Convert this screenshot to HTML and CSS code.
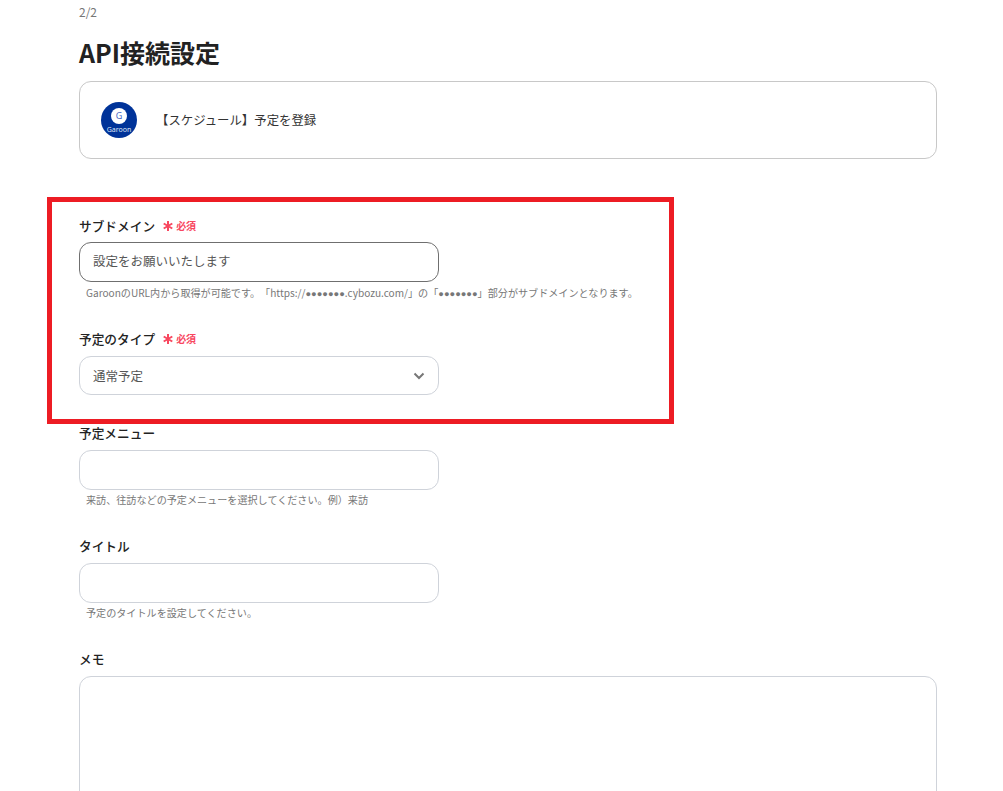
FILE: index.html
```html
<!DOCTYPE html>
<html lang="ja">
<head>
<meta charset="utf-8">
<title>API接続設定</title>
<link rel="stylesheet" href="styles.css">
</head>
<body>
<main class="page">
  <div class="step">2/2</div>
  <h1 class="title">API接続設定</h1>
  <section class="action-card">
    <svg class="logo" viewBox="0 0 36 36" aria-hidden="true">
      <circle cx="18" cy="18" r="18" fill="#003399"/>
      <circle cx="18" cy="14" r="8" fill="#fff"/>
      <text x="18" y="17.3" class="logo-g">G</text>
      <text x="18" y="29.5" class="logo-name">Garoon</text>
    </svg>
    <span class="action-text">【スケジュール】予定を登録</span>
  </section>
  <form class="form">
    <div class="field field-first">
      <div class="label"><span>サブドメイン</span><span class="req"><svg class="star" viewBox="0 0 12 12" aria-hidden="true"><path d="M6 1v10M1.7 3.5l8.6 5M10.3 3.5l-8.6 5"/></svg>必須</span></div>
      <div class="input input-filled"><span class="filled-text">設定をお願いいたします</span></div>
      <p class="hint">GaroonのURL内から取得が可能です。「https://<span class="dots">●●●●●●●</span>.cybozu.com/」の「<span class="dots">●●●●●●●</span>」部分がサブドメインとなります。</p>
    </div>
    <div class="field field-select">
      <div class="label"><span>予定のタイプ</span><span class="req"><svg class="star" viewBox="0 0 12 12" aria-hidden="true"><path d="M6 1v10M1.7 3.5l8.6 5M10.3 3.5l-8.6 5"/></svg>必須</span></div>
      <div class="input select"><span>通常予定</span>
        <svg class="chevron" viewBox="0 0 12 8" aria-hidden="true"><path d="M1.5 1.5 6 6l4.5-4.5"/></svg>
      </div>
    </div>
    <div class="field field-menu">
      <div class="label"><span>予定メニュー</span></div>
      <div class="input input-lower"></div>
      <p class="hint hint-lower">来訪、往訪などの予定メニューを選択してください。例）来訪</p>
    </div>
    <div class="field field-title">
      <div class="label"><span>タイトル</span></div>
      <div class="input input-lower"></div>
      <p class="hint hint-lower">予定のタイトルを設定してください。</p>
    </div>
    <div class="field field-memo">
      <div class="label"><span>メモ</span></div>
      <div class="textarea"></div>
    </div>
  </form>
  <div class="highlight"></div>
</main>
</body>
</html>
```

FILE: styles.css
```css
* { box-sizing: border-box; }
html, body { margin: 0; height: 791px; overflow: hidden; background: #fff; }
body { font-family: "Noto Sans CJK JP", "Noto Sans", sans-serif; color: #222; }
.page { position: relative; width: 1003px; height: 791px; padding: 0 66px 0 79px; overflow: hidden; }
.step { height: 25px; padding-top: 3px; font-size: 12px; line-height: 18px; color: #777; }
.title { margin: 0; height: 56px; font-size: 25px; line-height: 54px; font-weight: 700; color: #222; }
.action-card { display: flex; align-items: center; height: 78px; padding-left: 21px; border: 1px solid #c8c8c8; border-radius: 12px; }
.logo { width: 36px; height: 36px; flex: none; }
.logo-g { font-family: "Open Sans", sans-serif; font-size: 9px; fill: #3b5cc0; text-anchor: middle; }
.logo-name { font-family: "Noto Sans", sans-serif; font-size: 7px; fill: #dfe6f7; text-anchor: middle; }
.action-text { margin-left: 19px; font-size: 12.4px; line-height: 18px; color: #333; }
.form { display: flex; flex-direction: column; }
.label { display: flex; align-items: center; height: 20px; font-size: 12.7px; font-weight: 500; line-height: 20px; color: #222; }
.req { display: flex; align-items: center; margin-left: 7px; font-size: 10px; font-weight: 700; color: #f8475f; }
.star { width: 12px; height: 12px; margin-right: 2px; fill: none; stroke: #f8475f; stroke-width: 2; }
.input { display: flex; align-items: center; width: 360px; height: 40px; margin-top: 6px; padding: 0 13px; border: 1px solid #cfd3da; border-radius: 12px; font-size: 12.5px; color: #555; }
.input-filled { border-color: #6f6f6f; }
.filled-text { margin-top: -3px; }
.input-lower { margin-top: 7px; }
.select { justify-content: space-between; height: 39px; margin-top: 7px; }
.chevron { width: 12px; height: 8px; fill: none; stroke: #777; stroke-width: 2; }
.hint { margin: 4px 0 0 7px; font-size: 10.1px; line-height: 14px; color: #777; white-space: nowrap; text-spacing-trim: space-all; }
.hint-lower { margin-top: 3px; }
.dots { font-family: "Liberation Sans", sans-serif; font-size: 9.3px; line-height: 1; }
.field-first { margin-top: 57px; }
.field-select { margin-top: 29px; }
.field-menu { margin-top: 28px; }
.field-title { margin-top: 29px; }
.field-memo { margin-top: 29px; }
.textarea { width: 100%; height: 200px; margin-top: 7px; border: 1px solid #cfd3da; border-radius: 12px; }
.highlight { position: absolute; left: 47px; top: 197px; width: 627px; height: 227px; border: 5px solid #ed1c24; pointer-events: none; }
```
